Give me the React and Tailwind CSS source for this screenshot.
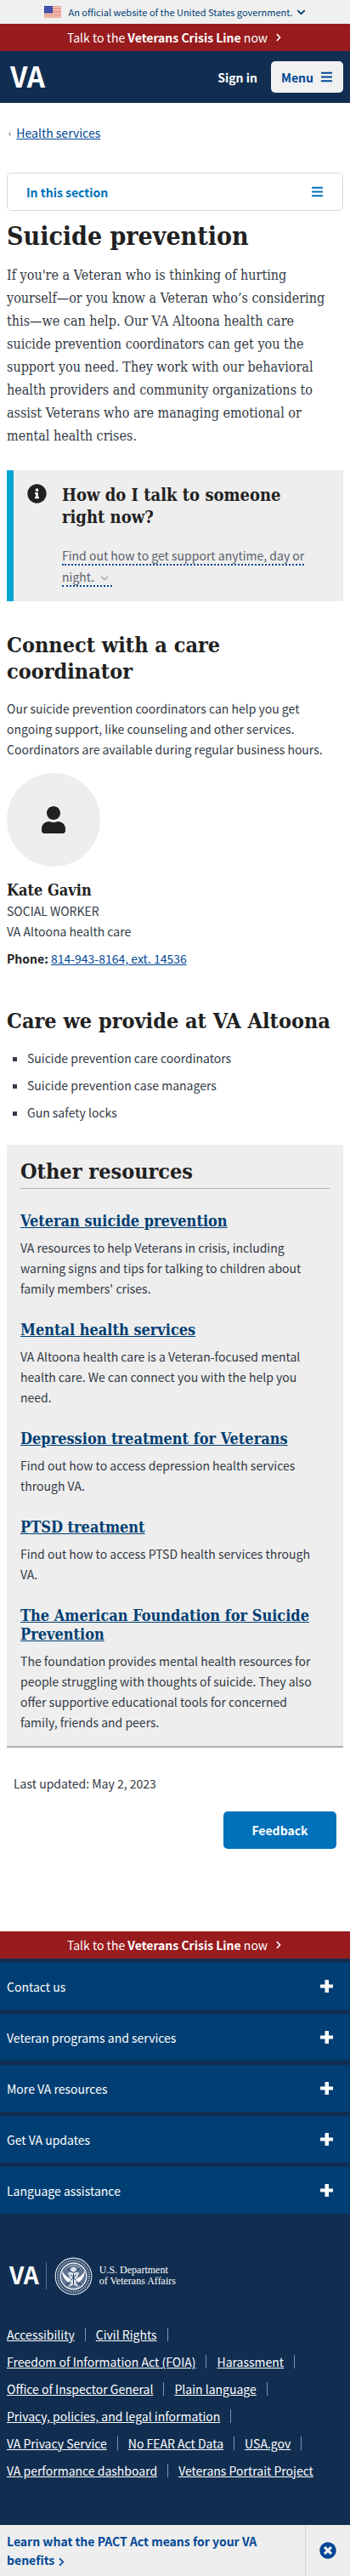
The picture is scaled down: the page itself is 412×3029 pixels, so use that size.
import { FaInfoCircle, FaUser, FaTimesCircle, FaBars, FaChevronRight, FaChevronDown } from "react-icons/fa";

const resources = [
  ["Veteran suicide prevention", "VA resources to help Veterans in crisis, including warning signs and tips for talking to children about family members' crises."],
  ["Mental health services", "VA Altoona health care is a Veteran-focused mental health care. We can connect you with the help you need."],
  ["Depression treatment for Veterans", "Find out how to access depression health services through VA."],
  ["PTSD treatment", "Find out how to access PTSD health services through VA."],
  ["The American Foundation for Suicide Prevention", "The foundation provides mental health resources for people struggling with thoughts of suicide. They also offer supportive educational tools for concerned family, friends and peers."],
];

const footerSections = ["Contact us", "Veteran programs and services", "More VA resources", "Get VA updates", "Language assistance"];

const footerLinks = [
  "Accessibility", "Civil Rights", "Freedom of Information Act (FOIA)", "Harassment", "Office of Inspector General", "Plain language",
  "Privacy, policies, and legal information", "VA Privacy Service", "No FEAR Act Data", "USA.gov", "VA performance dashboard", "Veterans Portrait Project",
];

const serif = "font-['DejaVu_Serif_Condensed','DejaVu_Serif',serif]";
const sectionHeading = `${serif} text-[25px] font-bold leading-[31px] text-[#212121]`;

function Flag() {
  return (
    <svg viewBox="0 0 20 14" className="h-[14px] w-5" aria-hidden="true">
      <path fill="#fff" d="M0 0h20v14H0z" />
      <path stroke="#dd5a46" strokeWidth="1.2" d="M0 1h20M0 3.4h20M0 5.8h20M0 8.2h20M0 10.6h20M0 13h20" />
      <path fill="#2f3ca0" d="M0 0h10v8.500H0z" />
      <path stroke="#a9b2e6" strokeWidth=".8" strokeDasharray="1 1.300" d="M1 1.600h8M2 3.500h7M1 5.400h8M2 7.200h7" />
    </svg>
  );
}

function Plus() {
  return (
    <svg viewBox="0 0 15 15" className="size-[15px]" aria-hidden="true">
      <path fill="currentColor" d="M6 0h3.500q.5 0 .5.500V5.500h4.500q.5 0 .5.500v3q0 .5-.5.500H10v5q0 .5-.5.500H6q-.5 0-.5-.5v-5H.5Q0 9.500 0 9V6q0-.5.5-.5h5v-5Q5.500 0 6 0z" />
    </svg>
  );
}

function Seal() {
  return (
    <svg viewBox="0 0 46 46" className="size-[45px] shrink-0" fill="none" aria-hidden="true">
      <circle cx="23" cy="23" r="21.800" stroke="#dfe5ee" strokeWidth="1.200" />
      <circle cx="23" cy="23" r="18.800" stroke="#a9b6c9" strokeWidth="2.600" strokeDasharray="1.300 .9" />
      <circle cx="23" cy="23" r="15.800" fill="#5f7390" stroke="#eef2f7" strokeWidth="1.400" />
      <path fill="#fff" d="M9 16c1 8 4 12 9 15l2.500-4.500c-5-2-9-5.500-11.500-10.500zM37 16c-1 8-4 12-9 15l-2.500-4.500c5-2 9-5.500 11.500-10.500z" />
      <path fill="#dfe5ee" d="M23 12c2 0 3.500 1.500 3.500 3.500L25 18l5 1-3 6-1 6 3 5-6-3-6 3 3-5-1-6-3-6 5-1-1.500-2.500C19.500 13.500 21 12 23 12z" />
      <path stroke="#112e51" d="M19.500 21l7 7M26.500 21l-7 7M20 17l3 2 3-2M23 20v13M15 13l3 3M31 13l-3 3M14 33l5-3M32 33l-5-3" />
      <path stroke="#fff" strokeDasharray="1 1" d="M14 14q9-8 18 0M15 35q8 6 16 0" />
    </svg>
  );
}

function CrisisLine() {
  return (
    <a href="#crisis" className="flex h-8 items-center justify-center bg-[#981b1e] text-white">
      <span>Talk to the <strong>Veterans Crisis Line</strong> now</span>
      <FaChevronRight className="ml-2 size-[10px]" />
    </a>
  );
}

export default function App() {
  return (
    <div className="bg-white font-['Noto_Sans_CJK_JP','Open_Sans',sans-serif] text-[14px] leading-6 text-[#323a45]">
      <header>
        <button className="flex h-7 w-full items-center justify-center bg-[#f0f0f0] text-[11px] text-[#003e73]">
          <Flag />
          <span className="ml-2">An official website of the United States government.</span>
          <FaChevronDown className="ml-1 size-[11px]" />
        </button>
        <CrisisLine />
        <div className="flex h-[61px] items-center bg-[#112e51] pr-2 pl-3 text-white">
          <a href="#home" className="pb-1 text-[33px] font-bold leading-9">VA</a>
          <button className="ml-auto font-bold">Sign in</button>
          <button className="ml-4 flex h-[37px] w-[85px] items-center justify-center gap-2 rounded-[5px] bg-[#f1f1f1] font-bold text-[#004795]">
            Menu <FaBars className="size-[15px]" />
          </button>
        </div>
      </header>

      <main className="px-2">
        <nav className="flex h-[82px] items-center pb-3">
          <span className="mr-[6px] ml-0.5 text-[11px]">‹</span>
          <a href="#services" className="text-[#004795] underline">Health services</a>
        </nav>
        <button className="flex h-[45px] w-full items-center justify-between rounded-[5px] border border-[#d6d7d9] px-[22px] font-bold text-[#0071bb]">
          In this section <FaBars className="size-[15px]" />
        </button>

        <h1 className={`${serif} mt-3 text-[30px] font-bold leading-9 text-[#212121]`}>Suicide prevention</h1>
        <p className={`${serif} mt-[14px] pr-2 text-[16px] leading-[27px]`}>
          If you're a Veteran who is thinking of hurting yourself—or you know a Veteran who’s considering this—we can help. Our VA Altoona health care suicide prevention coordinators can get you the support you need. They work with our behavioral health providers and community organizations to assist Veterans who are managing emotional or mental health crises.
        </p>

        <section className="mt-[27px] flex border-l-8 border-[#00a6d2] bg-[#eee] pt-4 pr-8 pb-4 pl-4">
          <FaInfoCircle className="size-[23px] shrink-0 text-[#212121]" />
          <div className="ml-[18px]">
            <h2 className={`${serif} text-[20px] font-bold leading-[26px] text-[#212121]`}>How do I talk to someone right now?</h2>
            <button className="mt-5 block text-left leading-[25px]">
              <span className="border-b-2 border-dotted border-[#004795] text-[#5b616b]">
                Find out how to get support anytime, day or night. <FaChevronDown className="mx-1 inline size-[10px] text-[#aeb0b5]" />
              </span>
            </button>
          </div>
        </section>

        <h2 className={`${sectionHeading} mt-9`}>Connect with a care coordinator</h2>
        <p className="mt-4">Our suicide prevention coordinators can help you get ongoing support, like counseling and other services. Coordinators are available during regular business hours.</p>
        <div className="mt-4 flex size-[110px] items-center justify-center rounded-full bg-[#eee]">
          <FaUser className="size-8 text-[#212121]" />
        </div>
        <h3 className={`${serif} mt-4 text-[18px] font-bold leading-6 text-[#212121]`}>Kate Gavin</h3>
        <p>SOCIAL WORKER</p>
        <p>VA Altoona health care</p>
        <p className="mt-2"><strong className="text-[#212121]">Phone:</strong> <a href="tel:8149438164" className="text-[#004795] underline">814-943-8164, ext. 14536</a></p>

        <h2 className={`${sectionHeading} mt-[46px]`}>Care we provide at VA Altoona</h2>
        <ul className="mt-4 flex list-[square] flex-col gap-2 pl-6">
          <li>Suicide prevention care coordinators</li>
          <li>Suicide prevention case managers</li>
          <li>Gun safety locks</li>
        </ul>

        <section className="mt-[26px] border-b-2 border-[#aeb0b5] bg-[#eee] px-4 pt-4 pb-4">
          <h2 className={`${sectionHeading} border-b border-[#aeb0b5] pb-1`}>Other resources</h2>
          <div className="mt-[27px] flex flex-col gap-[26px]">
            {resources.map(([title, text]) => (
              <div key={title}>
                <h3 className={`${serif} mb-2 text-[18px] font-bold leading-[22px]`}><a href="#resource" className="text-[#003e73] underline">{title}</a></h3>
                <p className="pr-2">{text}</p>
              </div>
            ))}
          </div>
        </section>

        <p className="mt-[30px] px-2">Last updated: May 2, 2023</p>
        <div className="mt-[21px] flex justify-end px-2">
          <button className="h-11 w-[133px] rounded-[5px] bg-[#0071bb] font-bold text-white">Feedback</button>
        </div>
      </main>

      <footer className="mt-[97px] bg-[#112e51] text-white">
        <CrisisLine />
        <div className="flex flex-col gap-[5px] pt-[5px]">
          {footerSections.map((s) => (
            <button key={s} className="flex h-[55px] items-center justify-between bg-[#003e73] pr-5 pl-2">
              {s} <Plus />
            </button>
          ))}
        </div>
        <a href="#va" className="mt-12 flex h-[50px] items-center pl-[11px]">
          <span className="pb-1 text-[28px] font-bold">VA</span>
          <span className="mr-[9px] ml-2 h-8 w-px bg-[#5b6f8c]" />
          <Seal />
          <span className="ml-2 font-['Liberation_Serif',serif] text-[12px] leading-[13px]">U.S. Department<br />of Veterans Affairs</span>
        </a>
        <ul className="mt-7 flex flex-wrap pr-7 pb-12 pl-2 leading-8">
          {footerLinks.map((l, i) => (
            <li key={l} className="flex items-center">
              <a href="#link" className="underline">{l}</a>
              {i < footerLinks.length - 1 && <span className="mx-3 h-4 w-px bg-[#7f93ae]" />}
            </li>
          ))}
        </ul>
        <div className="flex h-[60px] bg-[#eee] font-bold text-[#004795]">
          <a href="#pact" className="flex-1 pt-2 pr-10 pl-2 leading-[22px]">Learn what the PACT Act means for your VA benefits <FaChevronRight className="inline size-[11px]" /></a>
          <button aria-label="Close" className="flex w-[53px] items-center justify-center border-l border-[#d6d7d9]"><FaTimesCircle className="size-5" /></button>
        </div>
      </footer>
    </div>
  );
}
